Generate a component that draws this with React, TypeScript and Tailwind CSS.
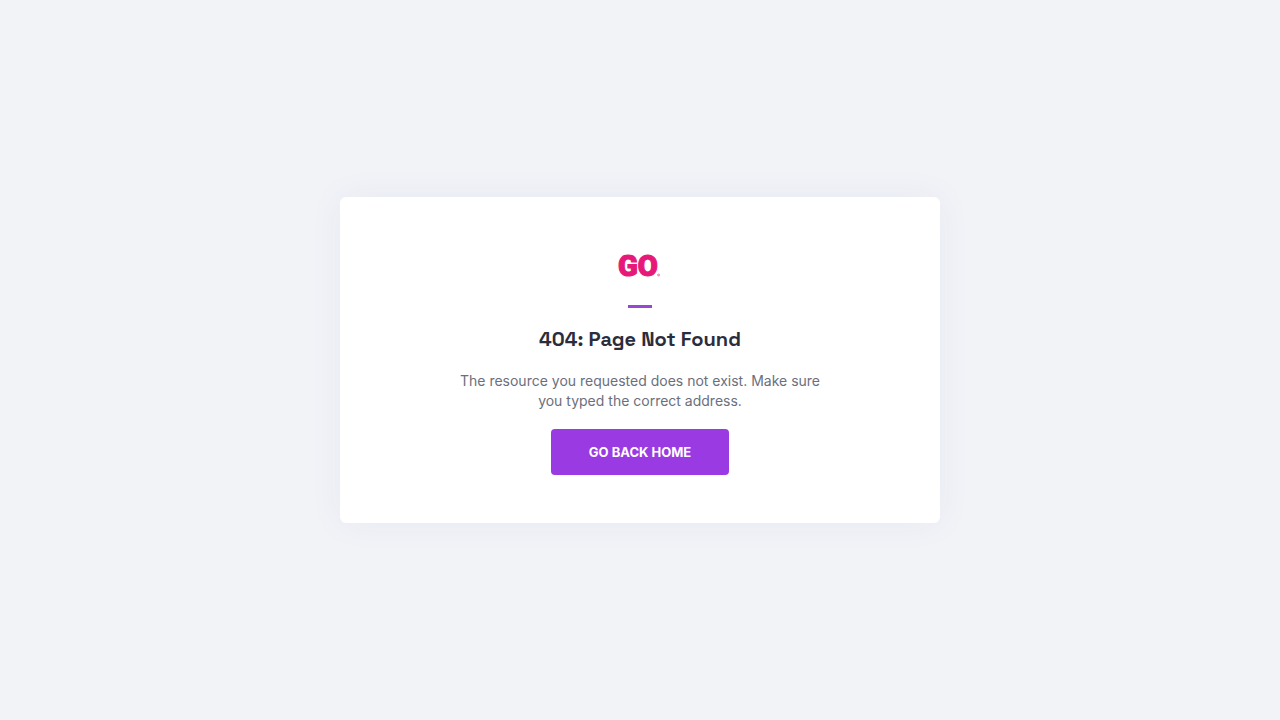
function GoLogo() {
  return (
    <svg viewBox="0 0 44 40" className="h-10 w-11" role="img" aria-label="GO">
      <text
        x="0"
        y="31"
        fill="#e6197a"
        stroke="#e6197a"
        strokeWidth="1.2"
        fontFamily="Roboto, 'Liberation Sans', sans-serif"
        fontWeight="900"
        fontSize="29"
      >
        GO
      </text>
      <circle cx="40.6" cy="30" r="1.1" fill="#f7b4d3" stroke="#ee5fa3" strokeWidth="0.6" />
    </svg>
  );
}

export default function App() {
  return (
    <main className="flex min-h-screen items-center justify-center bg-[#f1f3f7] font-['Inter',sans-serif]">
      <section className="flex w-full max-w-[600px] flex-col items-center rounded-md bg-white p-12 text-center shadow-[0_0_36px_rgba(80,60,180,0.05)]">
        <GoLogo />
        <div className="mt-5 h-[3px] w-6 bg-[#9548d0]" />
        <h1 className="mt-4 font-['Space_Grotesk','Inter',sans-serif] text-xl leading-[30px] font-bold text-[#2b2d3d]">
          404: Page Not Found
        </h1>
        <p className="mt-[17px] max-w-96 text-sm leading-5 text-[#6b6f7d]">
          The resource you requested does not exist. Make sure you typed the correct address.
        </p>
        <a
          href="/"
          className="mt-[18px] flex h-[46px] items-center rounded bg-[#993ae2] px-[38px] text-[13px] leading-5 font-bold text-white"
        >
          GO BACK HOME
        </a>
      </section>
    </main>
  );
}
